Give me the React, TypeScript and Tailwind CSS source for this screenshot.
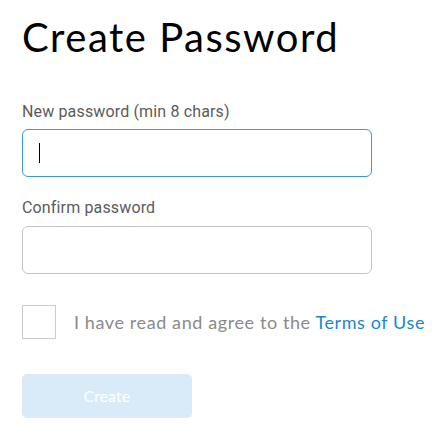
import React, { useState } from 'react';

const heading = { fontFamily: 'Lato, "Noto Sans", sans-serif' };
const body = { fontFamily: 'Roboto, "Noto Sans", sans-serif' };

const App: React.FC = () => {
  const [agree, setAgree] = useState(false);

  return (
    <div className="min-h-screen bg-white px-[22px] pt-[13px]">
      <h1 className="text-[40px] leading-[48px] tracking-[1.5px] text-black font-normal" style={heading}>
        Create Password
      </h1>

      <div className="mt-[41px]" style={body}>
        <label className="block text-[16px] leading-[20px] tracking-[0.15px] text-[#5b5b5b]">New password (min 8 chars)</label>
        <div className="mt-[7px] w-[350px] h-[48px] rounded-[6px] border border-[#3a99dc] flex items-center pl-[16px]">
          <span className="block w-px h-[20px] bg-black" />
        </div>

        <label className="block mt-[21px] text-[16px] leading-[20px] tracking-[0.15px] text-[#5b5b5b]">Confirm password</label>
        <div className="mt-[8px] w-[350px] h-[48px] rounded-[6px] border border-[#c4c4c4]" />
      </div>

      <div className="mt-[31px] flex items-center">
        <button
          onClick={() => setAgree(!agree)}
          className="w-[34px] h-[34px] border border-[#cccccc] bg-white shrink-0"
          aria-pressed={agree}
        />
        <p className="ml-[18px] text-[18px] tracking-[0.6px] whitespace-nowrap text-[#8a8a8a]" style={heading}>
          I have read and agree to the <span className="text-[#1a86d0]">Terms of Use</span>
        </p>
      </div>

      <button
        className="mt-[35px] w-[170px] h-[44px] rounded-[5px] bg-[#d9ebf8] text-white text-[15px] tracking-[0.5px]"
        style={heading}
      >
        Create
      </button>
    </div>
  );
};

export default App;
